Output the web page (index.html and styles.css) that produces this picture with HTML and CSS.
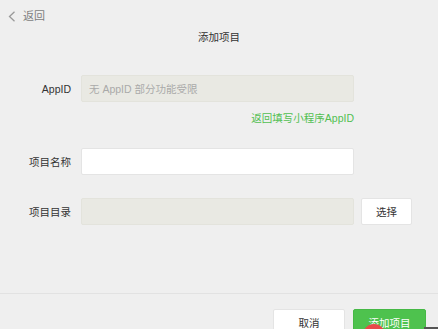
FILE: index.html
```html
<!DOCTYPE html>
<html lang="zh-CN">
<head>
<meta charset="utf-8">
<title>添加项目</title>
<link rel="stylesheet" href="styles.css">
</head>
<body>
<div class="page">
  <div class="topbar">
    <svg class="chev" width="8" height="11" viewBox="0 0 8 11"><path d="M6.5 0.8 L1.5 5.5 L6.5 10.2" fill="none" stroke="#9a9a9a" stroke-width="1.3"/></svg>
    <span class="back">返回</span>
  </div>
  <div class="title">添加项目</div>
  <div class="form">
    <div class="row">
      <div class="label">AppID</div>
      <div class="field gray"><span class="ph">无 AppID 部分功能受限</span></div>
    </div>
    <div class="linkrow"><span class="link">返回填写小程序AppID</span></div>
    <div class="row row2">
      <div class="label">项目名称</div>
      <div class="field white"></div>
    </div>
    <div class="row row3">
      <div class="label">项目目录</div>
      <div class="field gray"></div>
      <div class="btn pick">选择</div>
    </div>
  </div>
  <div class="footer">
    <div class="btn cancel">取消</div>
    <div class="btn primary">添加项目</div>
  </div>
  <div class="dot"></div>
  <div class="dark"></div>
</div>
</body>
</html>
```
FILE: styles.css
```css
html, body {
  margin: 0;
  padding: 0;
  background: #efefef;
  overflow: hidden;
}
.page {
  position: relative;
  width: 438px;
  height: 329px;
  overflow: hidden;
  font-family: "Liberation Sans", "Noto Sans CJK SC", sans-serif;
  font-size: 10.5px;
  color: #333;
}
.topbar {
  display: flex;
  align-items: center;
  padding: 8px 0 0 8px;
  height: 17px;
  gap: 7px;
}
.chev { display: block; }
.back {
  color: #7d7d7d;
  font-size: 11px;
  line-height: 17px;
}
.title {
  margin-top: 4px;
  text-align: center;
  line-height: 17px;
  color: #333;
}
.form {
  margin-top: 29px;
  height: 150px;
}
.row {
  display: grid;
  grid-template-columns: 71px 273px 58px;
  column-gap: 10px;
  align-items: center;
  height: 27px;
}
.row .btn { margin-left: -3px; }
.label {
  text-align: right;
  color: #333;
}
.field {
  height: 27px;
  box-sizing: border-box;
  border-radius: 2px;
  display: flex;
  align-items: center;
  padding-left: 7px;
}
.gray {
  background: #e9e9e3;
  border: 1px solid #e3e3dc;
}
.white {
  background: #ffffff;
  border: 1px solid #e4e4e4;
}
.ph {
  color: #a9a9a9;
}
.linkrow {
  margin-top: 8px;
  width: 354px;
  text-align: right;
  line-height: 16px;
}
.link {
  color: #52bf52;
}
.row2 { margin-top: 22px; }
.row3 { margin-top: 23px; }
.btn {
  box-sizing: border-box;
  height: 27px;
  display: flex;
  align-items: center;
  justify-content: center;
  border-radius: 2px;
}
.pick {
  width: 51px;
  background: #fff;
  border: 1px solid #e4e4e4;
  color: #333;
}
.footer {
  margin-top: 68px;
  border-top: 1px solid #e2e2e2;
  padding: 15px 12px 0 0;
  display: flex;
  justify-content: flex-end;
  gap: 8px;
}
.cancel {
  width: 72px;
  height: 26px;
  background: #fff;
  border: 1px solid #e4e4e4;
  color: #333;
}
.primary {
  width: 73px;
  height: 26px;
  background: #4ec24e;
  border: 1px solid #46b946;
  color: #fff;
}
.dot {
  position: absolute;
  left: 363px;
  top: 324px;
  width: 22px;
  height: 22px;
  border-radius: 50%;
  background: #e84a4a;
}
.dark {
  position: absolute;
  left: 424px;
  top: 327px;
  width: 14px;
  height: 4px;
  background: #555;
}
```
